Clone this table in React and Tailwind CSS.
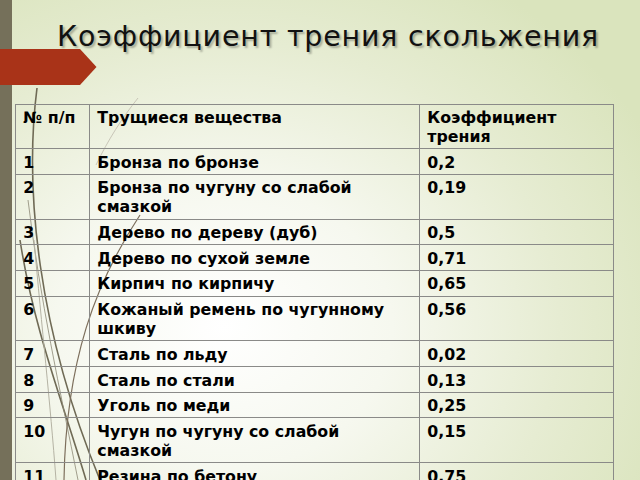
import React from "react";

const rows = [
  ["1", "Бронза по бронзе", "0,2"],
  ["2", "Бронза по чугуну со слабой смазкой", "0,19"],
  ["3", "Дерево по дереву (дуб)", "0,5"],
  ["4", "Дерево по сухой земле", "0,71"],
  ["5", "Кирпич по кирпичу", "0,65"],
  ["6", "Кожаный ремень по чугунному шкиву", "0,56"],
  ["7", "Сталь по льду", "0,02"],
  ["8", "Сталь по стали", "0,13"],
  ["9", "Уголь по меди", "0,25"],
  ["10", "Чугун по чугуну со слабой смазкой", "0,15"],
  ["11", "Резина по бетону", "0,75"],
];

const cell =
  "border border-[#8a8a88] align-top pl-[7px] pr-[7px] pt-[3.5px] pb-[2.2px] leading-[19px]";

export default function App() {
  return (
    <div
      className="relative w-[640px] h-[480px] overflow-hidden flex"
      style={{
        background:
          "radial-gradient(ellipse 75% 85% at 35% 68%, #ffffff 0%, #f6f8ef 35%, #e6ecd2 70%, #dae4bd 100%)",
        fontFamily: '"DejaVu Sans", "Noto Sans", sans-serif',
      }}
    >
      {/* background curves */}
      <svg
        className="absolute inset-0 pointer-events-none"
        width="640"
        height="480"
        viewBox="0 0 640 480"
        fill="none"
      >
        <path d="M37,88 C24,190 38,330 100,480" stroke="#6f6a55" strokeWidth="1.6" />
        <path d="M20,240 C34,330 62,400 86,480" stroke="#6f6a55" strokeWidth="1.6" />
        <path d="M28,200 C40,300 60,390 78,480" stroke="#8c8875" strokeWidth="1" opacity="0.8" />
        <path d="M34,240 C42,330 50,400 56,480" stroke="#b5b3a4" strokeWidth="1" />
        <path d="M140,215 C96,282 66,360 64,480" stroke="#7d6f5c" strokeWidth="1.2" />
        <path d="M138,98 C122,118 108,140 96,165" stroke="#c9c6b8" strokeWidth="1" />
      </svg>

      {/* left strip */}
      <div className="w-[12px] h-full bg-[#75705a] shrink-0" />

      {/* red arrow */}
      <svg
        className="absolute left-0 top-[49px]"
        width="97"
        height="37"
        viewBox="0 0 97 37"
      >
        <polygon points="0,0 80,0 96.5,18 80,36 0,36" fill="#a93318" />
      </svg>

      <div className="relative flex flex-col">
        <h1
          className="ml-[45px] mt-[21px] text-[28.5px] tracking-[0.8px] text-[#111] font-normal leading-[32px] whitespace-nowrap"
          style={{ textShadow: "2px 2px 2px rgba(0,0,0,0.28)" }}
        >
          Коэффициент трения скольжения
        </h1>
        <table
          className="ml-[3.3px] mt-[50.5px] table-fixed border-collapse w-[597.4px] text-[15.8px] font-bold text-black"
        >
          <colgroup>
            <col className="w-[74px]" />
            <col className="w-[330px]" />
            <col className="w-[193.4px]" />
          </colgroup>
          <tbody>
            <tr>
              <td className={cell}>№ п/п</td>
              <td className={cell}>Трущиеся вещества</td>
              <td className={cell}>Коэффициент трения</td>
            </tr>
            {rows.map((r) => (
              <tr key={r[0]}>
                <td className={cell}>{r[0]}</td>
                <td className={cell}>{r[1]}</td>
                <td className={cell}>{r[2]}</td>
              </tr>
            ))}
          </tbody>
        </table>
      </div>
    </div>
  );
}
